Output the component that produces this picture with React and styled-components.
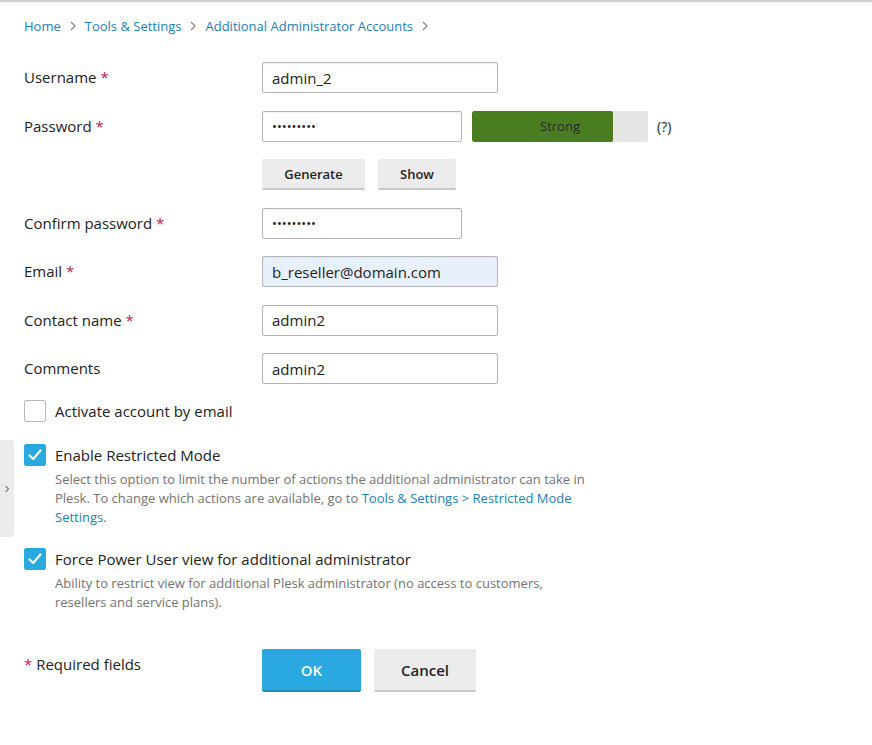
import React from 'react';
import styled, { createGlobalStyle } from 'styled-components';

const GlobalStyle = createGlobalStyle`
  html, body {
    margin: 0;
    padding: 0;
    background: #fff;
    font-family: "Open Sans", "Noto Sans", sans-serif;
    color: #222;
  }
`;

const Page = styled.div`
  position: relative;
  min-height: 745px;
  border-top: 2px solid #d2d2d2;
  padding: 13px 24px 0 24px;
  box-sizing: border-box;
  background: linear-gradient(#f3f3f3, #fff 4px);
`;

const SideTab = styled.div`
  position: absolute;
  left: 0;
  top: 438px;
  width: 14px;
  height: 97px;
  background: #ececec;
  border-radius: 0 4px 4px 0;
  display: flex;
  align-items: center;
  justify-content: center;
`;

const Breadcrumbs = styled.nav`
  display: flex;
  align-items: center;
  gap: 8px;
  font-size: 13px;
  height: 22px;
  margin-bottom: 25px;
`;

const Crumb = styled.a`
  color: #1a7fb8;
  text-decoration: none;
`;

const Sep = styled.span`
  display: flex;
  align-items: center;
`;

const Row = styled.div`
  display: flex;
  align-items: flex-start;
  margin-bottom: ${p => p.$gap ?? 17.5}px;
`;

const Label = styled.label`
  width: 238px;
  flex-shrink: 0;
  font-size: 15px;
  line-height: 30px;
  color: #222;
`;

const Req = styled.span`
  color: #c21a4f;
`;

const Input = styled.input`
  box-sizing: border-box;
  width: ${p => p.$w || 236}px;
  height: 31px;
  border: 1px solid #b5b5b5;
  border-radius: 2px;
  padding: 0 9px;
  font-family: inherit;
  font-size: 15px;
  color: #222;
  background: ${p => (p.$filled ? '#e8f0fe' : '#fff')};
  outline: none;
  box-shadow: inset 0 1px 2px rgba(0, 0, 0, 0.06);
  &[type='password'] {
    font-size: 13px;
  }
`;

const Controls = styled.div`
  display: flex;
  align-items: center;
  gap: 10px;
`;

const Strength = styled.div`
  position: relative;
  width: 176px;
  height: 31px;
  background: #e6e6e6;
  border-radius: 2px;
  overflow: hidden;
`;

const StrengthFill = styled.div`
  height: 100%;
  background: #4a7d20;
  border-radius: 2px;
`;

const StrengthText = styled.span`
  position: absolute;
  inset: 0;
  display: flex;
  align-items: center;
  justify-content: center;
  font-size: 13px;
  color: #2a2a2a;
`;

const Hint = styled.span`
  font-size: 14px;
  color: #222;
  margin-left: -1px;
`;

const Buttons = styled.div`
  display: flex;
  gap: ${p => p.$gap || 13}px;
  margin-left: ${p => p.$indent ?? 238}px;
  margin-bottom: 17.5px;
`;

const Button = styled.button`
  box-sizing: border-box;
  height: ${p => p.$h || 31}px;
  min-width: ${p => p.$w || 0}px;
  padding: 0 20px;
  border: none;
  border-bottom: 2px solid ${p => (p.$primary ? '#1f8dbd' : '#c7c7c7')};
  border-radius: 2px;
  background: ${p => (p.$primary ? '#29a9df' : '#ececec')};
  color: ${p => (p.$primary ? '#fff' : '#222')};
  font-family: inherit;
  font-size: ${p => p.$fs || 13}px;
  font-weight: 600;
  cursor: pointer;
`;

const CheckList = styled.div`
  display: flex;
  flex-direction: column;
  gap: 21.5px;
  margin-top: 16px;
`;

const CheckItem = styled.div`
  display: flex;
  gap: 9px;
`;

const Box = styled.span`
  box-sizing: border-box;
  width: 22px;
  height: 22px;
  flex-shrink: 0;
  border-radius: 2px;
  border: 1px solid ${p => (p.$checked ? '#29a9df' : '#b8b8b8')};
  background: ${p => (p.$checked ? '#29a9df' : '#fff')};
  display: flex;
  align-items: center;
  justify-content: center;
`;

const CheckBody = styled.div`
  display: flex;
  flex-direction: column;
  max-width: 535px;
`;

const CheckTitle = styled.div`
  font-size: 15px;
  line-height: 22px;
  color: #222;
`;

const Desc = styled.div`
  font-size: 13px;
  line-height: 19px;
  color: #737373;
  margin-top: 4px;
`;

const Footer = styled.div`
  display: flex;
  align-items: flex-start;
  margin-top: 37px;
`;

const FooterNote = styled.div`
  width: 238px;
  font-size: 15px;
  line-height: 30px;
`;

const Check = () => (
  <svg width="14" height="12" viewBox="0 0 14 12">
    <path d="M1.5 6.5 L5.2 10 L12.5 1.5" fill="none" stroke="#fff" strokeWidth="2.2" strokeLinecap="round" strokeLinejoin="round" />
  </svg>
);

const Chevron = ({ color = '#888', size = 8 }) => (
  <svg width={size} height={size + 2} viewBox="0 0 8 10">
    <path d="M2 1 L6 5 L2 9" fill="none" stroke={color} strokeWidth="1.3" />
  </svg>
);

const App = () => (
  <>
    <GlobalStyle />
    <Page>
      <SideTab>
        <Chevron color="#333" size={6} />
      </SideTab>
      <Breadcrumbs>
        <Crumb href="#">Home</Crumb>
        <Sep><Chevron /></Sep>
        <Crumb href="#">Tools &amp; Settings</Crumb>
        <Sep><Chevron /></Sep>
        <Crumb href="#">Additional Administrator Accounts</Crumb>
        <Sep><Chevron /></Sep>
      </Breadcrumbs>

      <Row>
        <Label>Username <Req>*</Req></Label>
        <Input defaultValue="admin_2" />
      </Row>
      <Row>
        <Label>Password <Req>*</Req></Label>
        <Controls>
          <Input type="password" $w={200} defaultValue="123456789" />
          <Strength>
            <StrengthFill style={{ width: '80%' }} />
            <StrengthText>Strong</StrengthText>
          </Strength>
          <Hint>(?)</Hint>
        </Controls>
      </Row>
      <Buttons>
        <Button $w={103}>Generate</Button>
        <Button $w={78}>Show</Button>
      </Buttons>
      <Row>
        <Label>Confirm password <Req>*</Req></Label>
        <Input type="password" $w={200} defaultValue="123456789" />
      </Row>
      <Row>
        <Label>Email <Req>*</Req></Label>
        <Input $filled defaultValue="b_reseller@domain.com" />
      </Row>
      <Row>
        <Label>Contact name <Req>*</Req></Label>
        <Input defaultValue="admin2" />
      </Row>
      <Row $gap={0}>
        <Label>Comments</Label>
        <Input defaultValue="admin2" />
      </Row>

      <CheckList>
        <CheckItem>
          <Box />
          <CheckBody>
            <CheckTitle>Activate account by email</CheckTitle>
          </CheckBody>
        </CheckItem>
        <CheckItem>
          <Box $checked><Check /></Box>
          <CheckBody>
            <CheckTitle>Enable Restricted Mode</CheckTitle>
            <Desc>
              Select this option to limit the number of actions the additional administrator can take in
              Plesk. To change which actions are available, go to{' '}
              <Crumb href="#">Tools &amp; Settings &gt; Restricted Mode Settings</Crumb>.
            </Desc>
          </CheckBody>
        </CheckItem>
        <CheckItem>
          <Box $checked><Check /></Box>
          <CheckBody>
            <CheckTitle>Force Power User view for additional administrator</CheckTitle>
            <Desc>
              Ability to restrict view for additional Plesk administrator (no access to customers,
              resellers and service plans).
            </Desc>
          </CheckBody>
        </CheckItem>
      </CheckList>

      <Footer>
        <FooterNote><Req>*</Req> Required fields</FooterNote>
        <Buttons $gap={13} $indent={0}>
          <Button $primary $h={43} $w={99} $fs={15}>OK</Button>
          <Button $h={43} $w={102} $fs={15}>Cancel</Button>
        </Buttons>
      </Footer>
    </Page>
  </>
);

export default App;
